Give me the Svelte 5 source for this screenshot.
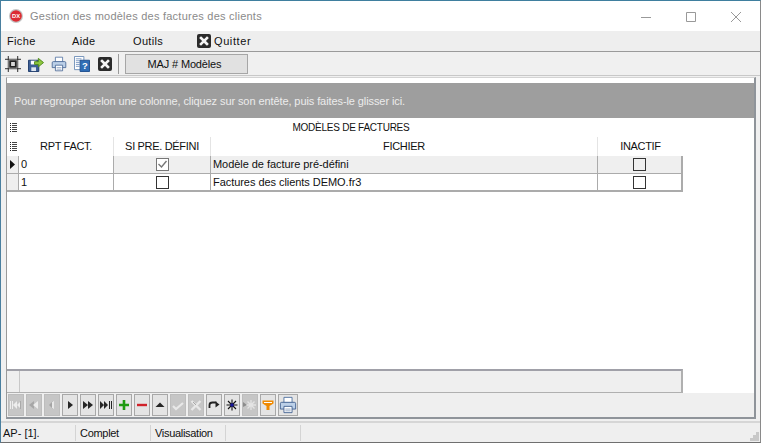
<script>
  const menus = [
    { label: 'Fiche', w: 65 },
    { label: 'Aide', w: 61 },
    { label: 'Outils', w: 64 }
  ];
  const nav = [
    { n: 'first', off: true }, { n: 'pprev', off: true }, { n: 'prev', off: true },
    { n: 'next' }, { n: 'nnext' }, { n: 'last' },
    { n: 'plus' }, { n: 'minus' }, { n: 'up' },
    { n: 'check', off: true }, { n: 'cross', off: true }, { n: 'redo' },
    { n: 'star' }, { n: 'star2', off: true }, { n: 'filter' }
  ];
  const rows = [
    { id: '0', def: true, file: 'Modèle de facture pré-défini', cur: true },
    { id: '1', def: false, file: 'Factures des clients DEMO.fr3', cur: false }
  ];
</script>

{#snippet xicon()}
  <svg width="14" height="14" viewBox="0 0 14 14">
    <rect width="14" height="14" rx="2" fill="#2b2b2b" />
    <path d="M4 4l6 6M10 4l-6 6" stroke="#f4f4f4" stroke-width="2.600" stroke-linecap="square" />
  </svg>
{/snippet}

{#snippet dots()}
  <svg class="dots" width="7" height="9" viewBox="0 0 7 9">
    <path d="M0 .5h1M0 2.500h1M0 4.500h1M0 6.500h1M0 8.500h1" stroke="#222" />
    <path d="M2 .5h5M2 2.500h5M2 4.500h5M2 6.500h5M2 8.500h5" stroke="#444" />
  </svg>
{/snippet}

{#snippet printer()}
  <path d="M5.500 1.500h9v6h-9z" fill="#fff" stroke="#4d6f9f" />
  <path d="M1.500 8.500a1.500 1.500 0 011.500-1.500h14a1.500 1.500 0 011.500 1.500v6h-17z" fill="#bcd0e8" stroke="#3f5f8f" />
  <path d="M5.500 11.500h9v7h-9z" fill="#fff" stroke="#3f5f8f" />
  <path d="M7 14.500h6M7 16.500h6" stroke="#8aa0bf" />
{/snippet}

{#snippet navIcon(n)}
  <svg width="14" height="14" viewBox="0 0 14 14">
    {#if n === 'first'}
      <path d="M1.500 3v8M3.500 3v8" stroke="#eee" /><path d="M4 7l4-4v8zM8 7l4-4v8z" fill="#eee" /><path d="M11.500 3v8" stroke="#aaa" />
    {:else if n === 'pprev'}
      <path d="M2 7l5-4v8z" fill="#a6a6a6" /><path d="M6 7l5-4v8z" fill="#ececec" />
    {:else if n === 'prev'}
      <path d="M4 7l4-4v8z" fill="#a4a4a4" /><path d="M7 4l2-1v8l-2-1z" fill="#e8e8e8" />
    {:else if n === 'next'}
      <path d="M5 3l5 4-5 4z" fill="#262626" />
    {:else if n === 'nnext'}
      <path d="M2 3l5 4-5 4zM7 3l5 4-5 4z" fill="#262626" />
    {:else if n === 'last'}
      <path d="M1 3l4 4-4 4zM5 3l4 4-4 4z" fill="#262626" /><path d="M10.500 3v8M12.500 3v8" stroke="#262626" />
    {:else if n === 'plus'}
      <path d="M7 2v10M2 7h10" stroke="#1f9a12" stroke-width="2.600" />
    {:else if n === 'minus'}
      <path d="M2 7h10" stroke="#d0222a" stroke-width="2.400" />
    {:else if n === 'up'}
      <path d="M7 4.500l4.500 4.500h-9z" fill="#262626" />
    {:else if n === 'check'}
      <path d="M2 8l3 3 7-6" stroke="#e8e8e8" stroke-width="2.200" fill="none" />
    {:else if n === 'cross'}
      <path d="M2.500 3l9 9M11.500 3l-9 9" stroke="#e8e8e8" stroke-width="2.400" /><path d="M4 4l3 3" stroke="#a8a8a8" />
    {:else if n === 'redo'}
      <path d="M2.500 10V7q0-2.500 3-2.500h4" stroke="#222" stroke-width="1.800" fill="none" /><path d="M8.500 3.500l4 3-4 3z" fill="#222" />
    {:else if n === 'star'}
      <path d="M7 1.500v11M1.500 7h11M3 3l8 8M11 3l-8 8" stroke="#111" stroke-width="1.100" /><circle cx="7" cy="7" r="1.800" fill="#16169a" />
    {:else if n === 'star2'}
      <path d="M8 2v10M3 7h10M4.500 3.500l7 7M11.500 3.500l-7 7" stroke="#e4e4e4" stroke-width="1.300" /><path d="M0 4l4 3-4 2z" fill="#8c8c8c" />
    {:else if n === 'filter'}
      <path d="M1.500 2.500h11v3L8.500 8v4h-3V8l-4-2.500z" fill="#f08a00" /><path d="M3 4.500h8" stroke="#fff" />
    {/if}
  </svg>
{/snippet}

<div class="window">
  <header class="titlebar">
    <svg class="logo" width="14" height="14" viewBox="0 0 14 14">
      <circle cx="7" cy="7" r="7" fill="#c4c4c4" />
      <circle cx="7" cy="7" r="5.800" fill="#dc2b33" />
      <text x="7" y="9" text-anchor="middle" font-size="5.800" font-weight="700" fill="#fff" font-family="Liberation Sans, sans-serif">DX</text>
    </svg>
    <span class="title">Gestion des modèles des factures des clients</span>
    <div class="caption">
      <svg width="12" height="12" viewBox="0 0 12 12"><path d="M1 6.500h10" stroke="#999" /></svg>
      <svg width="12" height="12" viewBox="0 0 12 12"><path d="M1.500 1.500h9v9h-9z" fill="none" stroke="#999" /></svg>
      <svg width="12" height="12" viewBox="0 0 12 12"><path d="M1 1l10 10M11 1L1 11" stroke="#999" /></svg>
    </div>
  </header>

  <nav class="menubar">
    {#each menus as m}
      <span class="menu" style:width="{m.w}px">{m.label}</span>
    {/each}
    <span class="quit">{@render xicon()}<span class="quit-label">Quitter</span></span>
  </nav>

  <div class="toolbar">
    <span class="tool">
      <svg width="16" height="16" viewBox="0 0 17 17">
        <path d="M3.500 0v17M13.500 0v17M0 3.500h17M0 13.500h17" stroke="#222" fill="none" />
        <path d="M4 4h9v9H4z" fill="#d9d9d9" /><path d="M5.500 5.500h6v6h-6z" fill="none" stroke="#222" stroke-width="2" />
      </svg>
    </span>
    <span class="tool">
      <svg width="16" height="16" viewBox="0 0 17 17">
        <path d="M.5 4.500h11v12H.5z" fill="#3d5f95" stroke="#1d3a6b" />
        <path d="M3 5h6v4H3z" fill="#fff" /><path d="M3.500 12h5v4h-5z" fill="#dfe6f0" />
        <path d="M7 6h4V2.500l5.500 4.500L11 11.500V9H7z" fill="#8ec63f" stroke="#4f8a1c" />
      </svg>
    </span>
    <span class="tool">
      <svg width="16" height="16" viewBox="0 0 20 20">{@render printer()}</svg>
    </span>
    <span class="tool">
      <svg width="16" height="16" viewBox="0 0 17 17">
        <path d="M.5.500h10v14H.5z" fill="#fff" stroke="#6f8fb8" />
        <path d="M2 3h6M2 5h6M2 7h4M2 9h4M2 11h4" stroke="#7f9cc4" />
        <path d="M6.500 4.500h10v12h-10z" fill="#2f6db5" stroke="#1f4f8f" />
        <text x="11.500" y="14" text-anchor="middle" font-size="10" font-weight="700" fill="#fff" font-family="Liberation Sans, sans-serif">?</text>
      </svg>
    </span>
    <span class="tool">{@render xicon()}</span>
    <span class="sep"></span>
    <button class="maj" type="button">MAJ # Modèles</button>
  </div>

  <main class="frame">
    <div class="grid-area">
      <div class="group">Pour regrouper selon une colonne, cliquez sur son entête, puis faites-le glisser ici.</div>
      <div class="table">
        <div class="band">
          <span class="ind">{@render dots()}</span>
          <span class="bandtitle">MODÈLES DE FACTURES</span>
        </div>
        <div class="tr head">
          <span class="ind">{@render dots()}</span>
          <span class="th">RPT FACT.</span>
          <span class="th">SI PRE. DÉFINI</span>
          <span class="th">FICHIER</span>
          <span class="th">INACTIF</span>
        </div>
        {#each rows as r}
          <div class="tr row" class:cur={r.cur}>
            <span class="ind cell">
              {#if r.cur}
                <svg width="5" height="9" viewBox="0 0 5 9"><path d="M0 0l5 4.500L0 9z" fill="#111" /></svg>
              {/if}
            </span>
            <span class="cell num">{r.id}</span>
            <span class="cell mid">
              <span class="box" class:muted={r.cur}>
                {#if r.def}
                  <svg width="11" height="11" viewBox="0 0 11 11"><path d="M1.500 5l3 3 5-6" stroke="#777" stroke-width="1.400" fill="none" /></svg>
                {/if}
              </span>
            </span>
            <span class="cell file">{r.file}</span>
            <span class="cell mid"><span class="box"></span></span>
          </div>
        {/each}
        <div class="spacer"></div>
        <div class="footer"><span class="find"></span></div>
      </div>
      <div class="navbar">
        {#each nav as b}
          <span class="nbtn" class:off={b.off}>{@render navIcon(b.n)}</span>
        {/each}
        <span class="nbtn print">
          <svg width="18" height="18" viewBox="0 0 20 20">{@render printer()}</svg>
        </span>
      </div>
    </div>
  </main>

  <footer class="status">
    <span class="pane">AP- [1].</span>
    <span class="pane">Complet</span>
    <span class="pane">Visualisation</span>
    <span class="pane"></span>
    <span class="grip">
      <svg width="9" height="9" viewBox="0 0 9 9"><path d="M6 0h3v3H6zM3 3h3v3H3zM6 3h3v3H6zM0 6h3v3H0zM3 6h3v3H3zM6 6h3v3H6z" fill="#c8c8c8" /></svg>
    </span>
  </footer>
</div>

<style>
  :global(body) {
    margin: 0;
    background: #f0f0f0;
  }
  .window {
    width: 761px;
    height: 443px;
    box-sizing: border-box;
    display: flex;
    flex-direction: column;
    overflow: hidden;
    border-top: 1px solid #3f7f9f;
    border-left: 1px solid #4a7f9f;
    border-right: 1px solid #8a8a8a;
    border-bottom: 1px solid #6f6f6f;
    background: #f0f0f0;
    font-family: "Liberation Sans", Arial, sans-serif;
    font-size: 11px;
    color: #111;
  }
  .titlebar {
    height: 30px;
    flex: none;
    background: #fff;
    display: flex;
    align-items: center;
    padding-left: 8px;
    box-sizing: border-box;
  }
  .logo {
    flex: none;
  }
  .title {
    margin-left: 7px;
    color: #8a8a8a;
    font-size: 11px;
    letter-spacing: 0.24px;
  }
  .caption {
    margin-left: auto;
    display: flex;
    gap: 33px;
    padding-right: 18px;
    padding-top: 1px;
  }
  .menubar {
    flex: none;
    background: #eeeeee;
    display: flex;
    align-items: center;
    padding-left: 6px;
    box-sizing: border-box;
    border-bottom: 1px solid #9a9a9a;
    height: 21px;
    letter-spacing: 0.35px;
  }
  .menu {
    display: block;
  }
  .quit {
    display: flex;
    align-items: center;
    gap: 3px;
  }
  .quit-label {
    letter-spacing: 0.6px;
  }
  .toolbar {
    height: 24px;
    flex: none;
    display: flex;
    align-items: center;
    box-sizing: border-box;
    background: #f0f0f0;
    border-bottom: 1px solid #c8c8c8;
  }
  .tool {
    width: 23px;
    display: flex;
    justify-content: center;
    align-items: center;
  }
  .sep {
    width: 1px;
    height: 20px;
    background: #9a9a9a;
    margin-left: 2px;
    margin-right: 6px;
  }
  .maj {
    width: 123px;
    height: 20px;
    box-sizing: border-box;
    border: 1px solid #a6a6a6;
    background: #e1e1e1;
    font: inherit;
    letter-spacing: -0.15px;
    color: #111;
    padding: 0 4px 0 0;
  }
  .frame {
    flex: 1;
    min-height: 0;
    padding: 1px 4px 2px 5px;
    display: flex;
    border-bottom: 2px solid #d6d6d6;
  }
  .grid-area {
    flex: 1;
    min-width: 0;
    display: flex;
    flex-direction: column;
    border: 2px solid #8f949a;
    border-top: 1px solid #d4d4d4;
    border-left: 1px solid #9a9a9a;
    background: #fff;
  }
  .group {
    height: 35px;
    margin-top: 5px;
    flex: none;
    background: #9e9e9e;
    color: #ececec;
    display: flex;
    align-items: center;
    padding-left: 7px;
    box-sizing: border-box;
    letter-spacing: -0.09px;
    padding-top: 1px;
  }
  .table {
    flex: 1;
    min-height: 0;
    width: 676px;
    display: flex;
    flex-direction: column;
  }
  .band {
    height: 19px;
    flex: none;
    display: flex;
    align-items: center;
  }
  .bandtitle {
    flex: 1;
    text-align: center;
    font-size: 10px;
    letter-spacing: -0.25px;
  }
  .ind {
    width: 12px;
    flex: none;
    display: flex;
    align-items: center;
    justify-content: center;
    box-sizing: border-box;
  }
  .dots {
    display: block;
  }
  .tr {
    display: grid;
    grid-template-columns: 12px 95px 97px 387px 85px;
    flex: none;
  }
  .head {
    height: 19px;
  }
  .th {
    text-align: center;
    line-height: 19px;
    border-right: 1px solid #e4e4e4;
    box-sizing: border-box;
    letter-spacing: -0.32px;
  }
  .th:last-child {
    border-right: 0;
  }
  .row {
    height: 18px;
    border-bottom: 2px solid #ababab;
    box-sizing: border-box;
  }
  .row.cur {
    background: #efefef;
    border-bottom-width: 1px;
  }
  .cell {
    border-right: 1px solid #ababab;
    box-sizing: border-box;
    line-height: 16px;
    padding-left: 2px;
    display: block;
    min-width: 0;
    white-space: nowrap;
    letter-spacing: -0.05px;
  }
  .cell:last-child {
    border-right: 2px solid #ababab;
  }
  .cell.ind {
    display: flex;
    background: #efefef;
    padding-left: 0;
  }
  .row:not(.cur) .cell {
    background: #fff;
  }
  .row:not(.cur) .cell.ind {
    background: #efefef;
  }
  .row.cur .num {
    background: #fff;
  }
  .mid {
    display: flex;
    align-items: center;
    justify-content: center;
    padding-left: 0;
  }
  .box {
    width: 13px;
    height: 13px;
    box-sizing: border-box;
    border: 1px solid #333;
    background: transparent;
    display: flex;
    align-items: center;
    justify-content: center;
  }
  .box.muted {
    border-color: #777;
    background: #fff;
  }
  .spacer {
    flex: 1;
  }
  .footer {
    height: 24px;
    flex: none;
    background: #efefef;
    border-top: 2px solid #a0a0a8;
    border-right: 2px solid #b0b0b0;
    border-bottom: 1px solid #b0b0b0;
    box-sizing: border-box;
  }
  .find {
    display: block;
    width: 12px;
    height: 100%;
    border-right: 1px solid #c8c8c8;
  }
  .navbar {
    height: 24px;
    flex: none;
    background: #efefef;
    display: flex;
    align-items: center;
    gap: 2px;
    padding-left: 1px;
  }
  .nbtn {
    width: 16px;
    height: 22px;
    box-sizing: border-box;
    border: 1px solid #a8a8a8;
    background: #e4e4e4;
    display: flex;
    align-items: center;
    justify-content: center;
    flex: none;
  }
  .nbtn.off {
    background: #c6c6c6;
    border-color: #bdbdbd;
  }
  .nbtn.print {
    width: 20px;
  }
  .status {
    height: 19px;
    flex: none;
    display: flex;
    align-items: center;
    background: #efefef;
    position: relative;
  }
  .pane {
    width: 75px;
    height: 16px;
    box-sizing: border-box;
    line-height: 16px;
    padding-left: 4px;
    border-right: 1px solid #d4d4d4;
    letter-spacing: -0.3px;
  }
  .pane:first-child {
    padding-left: 2px;
    letter-spacing: 0;
  }
  .grip {
    position: absolute;
    right: 1px;
    bottom: 1px;
    line-height: 0;
  }
</style>
